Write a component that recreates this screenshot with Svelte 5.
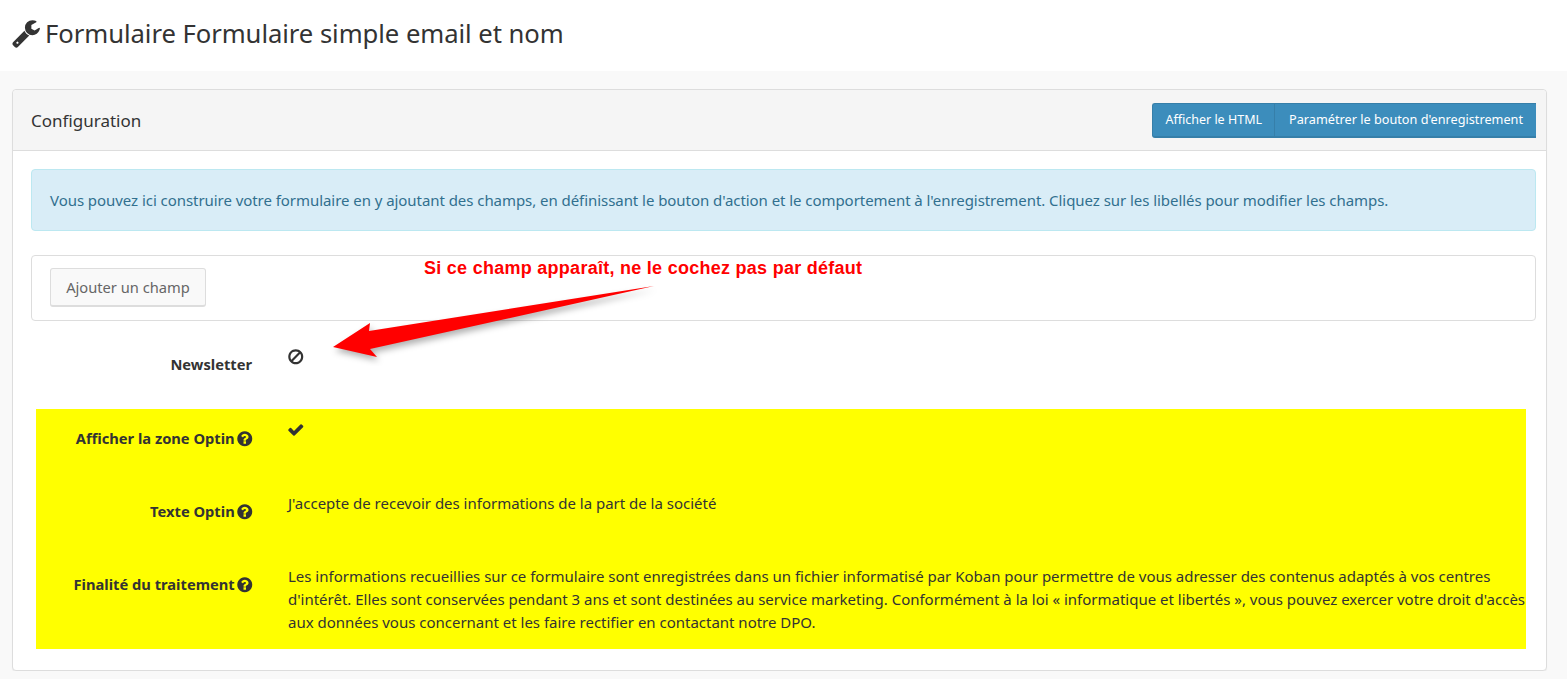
<script>
  const rows = [
    { label: 'Afficher la zone Optin', help: true, kind: 'check' },
    { label: 'Texte Optin', help: true, text: "J'accepte de recevoir des informations de la part de la société" },
    {
      label: 'Finalité du traitement',
      help: true,
      text: "Les informations recueillies sur ce formulaire sont enregistrées dans un fichier informatisé par Koban pour permettre de vous adresser des contenus adaptés à vos centres d'intérêt. Elles sont conservées pendant 3 ans et sont destinées au service marketing. Conformément à la loi « informatique et libertés », vous pouvez exercer votre droit d'accès aux données vous concernant et les faire rectifier en contactant notre DPO."
    }
  ];

  const helpPath = 'M1024 1376v-192q0-14-9-23t-23-9h-192q-14 0-23 9t-9 23v192q0 14 9 23t23 9h192q14 0 23-9t9-23zm256-672q0-88-55.5-163t-138.5-116-170-41q-243 0-371 213-15 24 8 42l132 100q7 6 19 6 16 0 25-12 53-68 86-92 34-24 86-24 48 0 85.5 26t37.5 59q0 38-20 61t-68 45q-63 28-115.5 86.5t-52.5 125.5v36q0 14 9 23t23 9h192q14 0 23-9t9-23q0-19 21.5-49.5t54.5-49.5q32-18 49-28.5t46-35 44.5-48 28-60.5 12.5-81zm384 192q0 209-103 385.5t-279.5 279.5-385.5 103-385.5-103-279.5-279.5-103-385.5 103-385.5 279.5-279.5 385.5-103 385.5 103 279.5 279.5 103 385.5z';
  const checkPath = 'M1671 566q0 40-28 68l-724 724-136 136q-28 28-68 28t-68-28l-136-136-362-362q-28-28-28-68t28-68l136-136q28-28 68-28t68 28l294 295 656-657q28-28 68-28t68 28l136 136q28 28 28 68z';
  const banPath = 'M1440 893q0-161-87-295l-754 753q137 89 297 89 111 0 211.5-43.5t173.5-116.5 116-174.5 43-212.5zm-999 299l755-754q-135-91-300-91-148 0-273 73t-198 199-73 274q0 162 89 299zm1223-299q0 157-61 300t-163.5 246-245 164-298.5 61-298.5-61-245-164-163.5-246-61-300 61-299.5 163.5-245.5 245-164 298.5-61 298.5 61 245 164 163.5 245.5 61 299.5z';
  const wrenchPath = 'M448 1472q0-26-19-45t-45-19-45 19-19 45 19 45 45 19 45-19 19-45zm644-420l-682 682q-37 37-90 37-52 0-91-37l-106-108q-38-36-38-90 0-53 38-91l681-681q39 98 114.5 173.5t173.5 114.5zm634-435q0 39-23 106-47 134-164.5 217.5t-258.5 83.5q-185 0-316.5-131.5t-131.5-316.5 131.5-316.5 316.5-131.5q58 0 121.5 16.5t107.5 46.5q16 11 16 28t-16 28l-293 169v224l193 107q5-3 79-48.5t135.5-81 70.5-35.5q15 0 23.5 10t8.5 25z';
</script>

<header class="page-header">
  <svg class="wrench" viewBox="0 0 1792 1792"><path d={wrenchPath} /></svg>
  <h1>Formulaire Formulaire simple email et nom</h1>
</header>

<main class="content">
  <section class="panel">
    <div class="panel-heading">
      <span class="panel-title">Configuration</span>
      <div class="btn-group">
        <button class="btn-primary">Afficher le HTML</button>
        <button class="btn-primary">Paramétrer le bouton d'enregistrement</button>
      </div>
    </div>

    <div class="panel-body">
      <div class="alert">
        Vous pouvez ici construire votre formulaire en y ajoutant des champs, en définissant le bouton d'action et le comportement à l'enregistrement. Cliquez sur les libellés pour modifier les champs.
      </div>

      <div class="well">
        <button class="btn-default">Ajouter un champ</button>
      </div>

      <div class="form-row newsletter">
        <span class="label">Newsletter</span>
        <div class="value">
          <svg class="state-icon" viewBox="0 0 1792 1792"><path d={banPath} /></svg>
        </div>
      </div>

      <div class="optin">
        {#each rows as row}
          <div class="form-row">
            <span class="label">
              {row.label}
              {#if row.help}
                <svg class="help" viewBox="0 0 1792 1792"><path d={helpPath} /></svg>
              {/if}
            </span>
            <div class="value">
              {#if row.kind === 'check'}
                <svg class="state-icon" viewBox="0 0 1792 1792"><path d={checkPath} /></svg>
              {:else}
                {row.text}
              {/if}
            </div>
          </div>
        {/each}
      </div>
    </div>
  </section>
</main>

<!-- annotation pasted over the screenshot -->
<div class="note">Si ce champ apparaît, ne le cochez pas par défaut</div>
<svg class="arrow" width="340" height="90" viewBox="0 0 340 90">
  <defs>
    <filter id="soft" x="-10%" y="-30%" width="120%" height="170%">
      <feGaussianBlur stdDeviation="3" />
    </filter>
  </defs>
  <polygon class="arrow-shadow" points="13,71 50,47 49,55 334,10 50,73 57,81" filter="url(#soft)" transform="translate(2 4)" />
  <polygon class="arrow-fill" points="13,71 50,47 49,55 334,10 50,73 57,81" />
</svg>

<style>
  :global(body) {
    margin: 0;
    background: #f9f9f9;
    color: #333;
    font-family: "Noto Sans", sans-serif;
    font-size: 15px;
    letter-spacing: -0.055px;
  }

  .page-header {
    display: flex;
    align-items: center;
    gap: 4px;
    height: 71px;
    padding: 0 0 5px 11px;
    box-sizing: border-box;
    background: #fff;
  }

  .wrench {
    width: 30px;
    height: 30px;
    fill: #333;
  }

  h1 {
    margin: 0;
    font-size: 25.65px;
    font-weight: 400;
  }

  .content {
    padding: 18px 20px 0 12px;
  }

  .panel {
    background: #fff;
    border: 1px solid #ddd;
    border-radius: 4px;
    box-shadow: 0 1px 1px rgba(0, 0, 0, 0.05);
  }

  .panel-heading {
    display: flex;
    justify-content: space-between;
    align-items: center;
    height: 60px;
    padding: 0 10px 0 18px;
    background: #f5f5f5;
    border-bottom: 1px solid #ddd;
    border-radius: 4px 4px 0 0;
  }

  .panel-title {
    font-size: 17px;
    letter-spacing: 0;
  }

  .btn-group {
    display: flex;
  }

  button {
    font-family: inherit;
    letter-spacing: 0;
  }

  .btn-primary {
    height: 35px;
    padding: 0 13px 2px 14px;
    color: #fff;
    font-size: 12.7px;
    background: #3c8dbc;
    border: 1px solid #367fa9;
    border-width: 1px 0 2px 1px;
  }

  .btn-primary:first-child {
    padding: 0 12px;
    font-size: 12.5px;
    border-radius: 3px 0 0 3px;
  }

  .panel-body {
    padding: 18px 10px 21px 18px;
  }

  .alert {
    display: flex;
    align-items: center;
    height: 62px;
    box-sizing: border-box;
    padding: 0 18px;
    color: #31708f;
    background: #d9edf7;
    border: 1px solid #bce8f1;
    border-radius: 4px;
  }

  .well {
    height: 66px;
    box-sizing: border-box;
    margin-top: 24px;
    padding: 12px 18px;
    border: 1px solid #ddd;
    border-radius: 4px;
  }

  .btn-default {
    width: 156px;
    height: 39px;
    color: #666;
    font-size: 14.7px;
    background: #f9f9f9;
    border: 1px solid #ddd;
    border-bottom-width: 2px;
    border-radius: 3px;
  }

  .form-row {
    display: grid;
    grid-template-columns: 221px 1fr;
    column-gap: 36px;
    align-items: start;
  }

  .label {
    padding-top: 8px;
    font-size: 14.7px;
    font-weight: 700;
    line-height: 20px;
    letter-spacing: 0;
    text-align: right;
  }

  .newsletter {
    height: 88px;
    padding-top: 25px;
    box-sizing: border-box;
  }

  .state-icon {
    display: block;
    width: 17.5px;
    height: 17.5px;
    margin: 2px 0 0 -1px;
    fill: #333;
  }

  .help {
    width: 17.5px;
    height: 17.5px;
    margin: 0 -1px 0 -3px;
    fill: #333;
    vertical-align: -3px;
  }

  .optin {
    height: 240px;
    margin: 0 10px 0 5px;
    padding-top: 10px;
    box-sizing: border-box;
    background: #ff0;
  }

  .optin .form-row {
    grid-template-columns: 216px 1fr;
    min-height: 73px;
  }

  .optin .label {
    padding-top: 9px;
  }

  .optin .value {
    line-height: 23px;
    letter-spacing: -0.01px;
  }

  .note {
    position: absolute;
    left: 424px;
    top: 258px;
    color: #f00;
    font-family: "Liberation Sans", sans-serif;
    font-size: 18px;
    font-weight: 700;
    letter-spacing: 0.27px;
    white-space: nowrap;
  }

  .arrow {
    position: absolute;
    left: 320px;
    top: 276px;
  }

  .arrow-fill {
    fill: #f00;
  }

  .arrow-shadow {
    fill: rgba(0, 0, 0, 0.3);
  }
</style>
